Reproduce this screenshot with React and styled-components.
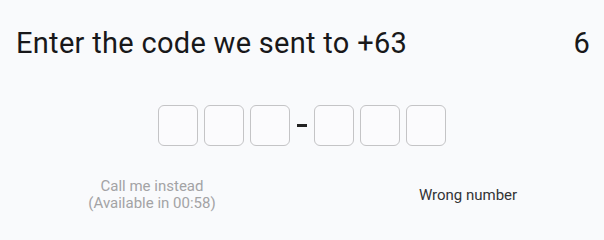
import React from "react";
import styled, { createGlobalStyle } from "styled-components";

const Global = createGlobalStyle`
  body {
    margin: 0;
    background: #f9fafc;
    font-family: Roboto, "Noto Sans", sans-serif;
  }
`;

const Page = styled.div`
  width: 604px;
  height: 231px;
  display: flex;
  flex-direction: column;
  box-sizing: border-box;
`;

const Header = styled.div`
  display: flex;
  justify-content: space-between;
  align-items: baseline;
  padding: 26px 14px 0 16px;
  font-size: 29px;
  line-height: 34px;
  letter-spacing: 0.3px;
  color: #18181a;
`;

const CodeRow = styled.div`
  display: flex;
  justify-content: center;
  align-items: center;
  gap: 6px;
  margin-top: 45px;
`;

const Digit = styled.div`
  width: 40px;
  height: 41px;
  box-sizing: border-box;
  border: 1px solid #c4c4c6;
  border-radius: 6px;
  background: #fbfbfd;
`;

const Dash = styled.div`
  width: 10px;
  height: 3px;
  background: #222;
  margin: 0 1px;
`;

const Footer = styled.div`
  display: grid;
  grid-template-columns: 304px 1fr;
  align-items: center;
  margin-top: 32px;
`;

const Action = styled.div`
  text-align: center;
  font-size: 15px;
  line-height: 17px;
  color: ${(p) => (p.$muted ? "#a3a3a5" : "#333335")};
  padding-left: ${(p) => (p.$muted ? "0" : "28px")};
`;

export default function App() {
  return (
    <Page>
      <Global />
      <Header>
        <span>Enter the code we sent to +63</span>
        <span>6</span>
      </Header>
      <CodeRow>
        <Digit />
        <Digit />
        <Digit />
        <Dash />
        <Digit />
        <Digit />
        <Digit />
      </CodeRow>
      <Footer>
        <Action $muted>
          Call me instead
          <br />
          (Available in 00:58)
        </Action>
        <Action>Wrong number</Action>
      </Footer>
    </Page>
  );
}
